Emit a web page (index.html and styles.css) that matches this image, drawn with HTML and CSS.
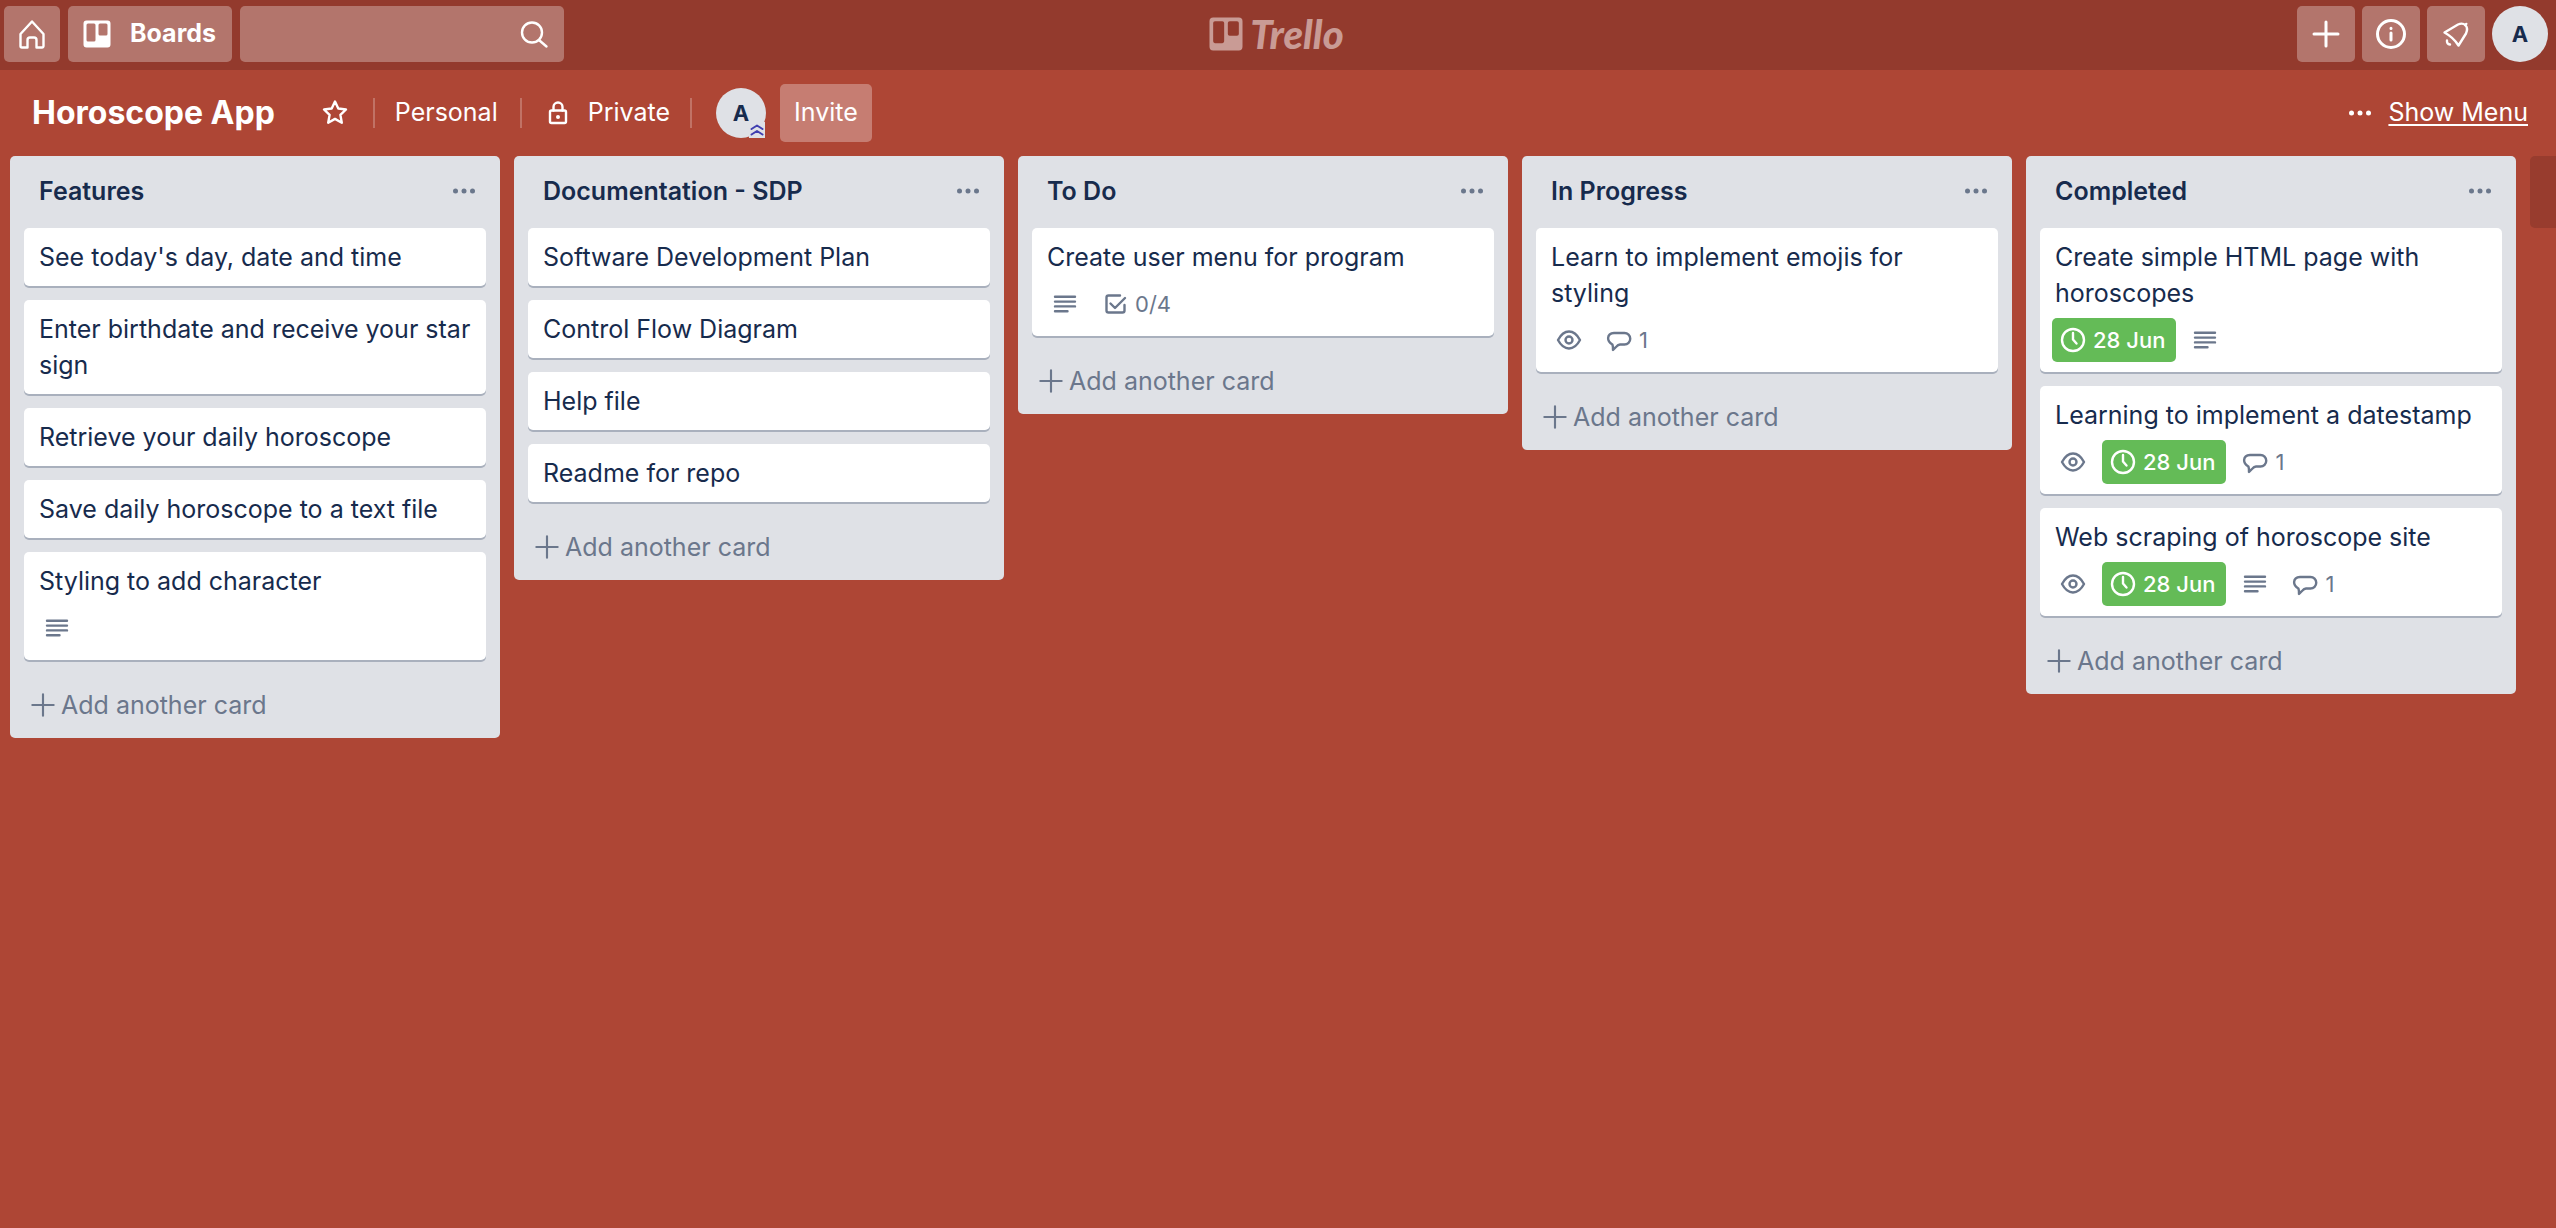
FILE: index.html
```html
<!DOCTYPE html>
<html lang="en">
<head>
<meta charset="utf-8">
<meta name="viewport" content="width=device-width, initial-scale=1">
<title>Horoscope App | Trello</title>
<link rel="stylesheet" href="styles.css">
</head>
<body>
<svg class="sprite" aria-hidden="true">
  <symbol id="i-home" viewBox="0 0 36 36"><path d="M18 5.500L29.500 18V30a1.500 1.500 0 0 1-1.500 1.500h-5.500V24a2.500 2.500 0 0 0-2.500-2.500h-4a2.500 2.500 0 0 0-2.500 2.500v7.500H8A1.500 1.500 0 0 1 6.500 30V18z"/></symbol>
  <symbol id="i-board" viewBox="0 0 36 36"><path fill="currentColor" stroke="none" fill-rule="evenodd" d="M7.500 4.500h21a3 3 0 0 1 3 3v21a3 3 0 0 1-3 3h-21a3 3 0 0 1-3-3v-21a3 3 0 0 1 3-3zM9 7.500a1.500 1.500 0 0 0-1.500 1.500v15A1.500 1.500 0 0 0 9 25.500h6a1.500 1.500 0 0 0 1.500-1.500V9A1.500 1.500 0 0 0 15 7.500zM21 7.500a1.500 1.500 0 0 0-1.500 1.500v9a1.500 1.500 0 0 0 1.500 1.500h6a1.500 1.500 0 0 0 1.500-1.500V9A1.500 1.500 0 0 0 27 7.500z"/></symbol>
  <symbol id="i-search" viewBox="0 0 36 36"><circle cx="16" cy="16.500" r="10"/><path d="M23.500 24.500l7 6"/></symbol>
  <symbol id="i-plus" viewBox="0 0 36 36"><path d="M18 6v24M6 18h24"/></symbol>
  <symbol id="i-info" viewBox="0 0 36 36"><circle cx="18" cy="18" r="13.500"/><path d="M18 17v7M18 12.300v.2"/></symbol>
  <symbol id="i-bell" viewBox="0 0 36 36"><path d="M6.500 16.500L20 8.500q4.500-2 7.500.7q2.800 3 .5 8.300L20.500 29.500q-5-8-14-13zM27 9.200l1.300-1.300"/><path d="M9 24.500q-.5 3.500 3 4"/></symbol>
  <symbol id="i-star" viewBox="0 0 36 36"><path d="M18 6.500l3.300 7 7.700 1-5.600 5.400 1.400 7.800-6.800-3.800-6.800 3.800 1.400-7.800L7 14.500l7.700-1z"/></symbol>
  <symbol id="i-lock" viewBox="0 0 36 36"><rect x="10" y="15.500" width="16" height="12.500" rx="1.500"/><path d="M13.500 15.500v-3.500a4.500 4.500 0 0 1 9 0v3.500"/><circle cx="18" cy="22" r="2" fill="currentColor" stroke="none"/></symbol>
  <symbol id="i-dots" viewBox="0 0 36 36"><g fill="currentColor" stroke="none"><circle cx="9.500" cy="18" r="2.500"/><circle cx="18" cy="18" r="2.500"/><circle cx="26.500" cy="18" r="2.500"/></g></symbol>
  <symbol id="i-desc" viewBox="0 0 36 36"><path d="M8 10.800h20M8 15.600h20M8 20.400h20M8 25.200h12.500"/></symbol>
  <symbol id="i-check" viewBox="0 0 36 36"><path d="M23 9.500H11.500a2 2 0 0 0-2 2v13a2 2 0 0 0 2 2h14a2 2 0 0 0 2-2V19M13.500 17.500l4.500 4.500L28 12"/></symbol>
  <symbol id="i-eye" viewBox="0 0 36 36"><path d="M7 18Q11.500 9.500 18 9.500T29 18Q24.500 26.500 18 26.500T7 18z"/><circle cx="18" cy="18" r="3.500"/></symbol>
  <symbol id="i-comment" viewBox="0 0 36 36"><path d="M13 11h10.500a5.600 5.600 0 0 1 0 11.500H19q-2 .2-3.500 2L12 28q.2-3.500-.6-5.500Q7 20 7.100 16Q7.500 11.200 13 11z"/></symbol>
  <symbol id="i-clock" viewBox="0 0 36 36"><circle cx="18" cy="18" r="11"/><path d="M18 11v6.500l3.500 4"/></symbol>
  <symbol id="i-admin" viewBox="0 0 16 16"><path d="M2.500 7L8 3.500 13.500 7M2.500 12.500L8 9l5.500 3.500"/></symbol>
</svg>

<header class="topbar">
  <div class="topbar-group">
    <button class="top-btn top-btn-home" type="button" aria-label="Home"><svg class="icon"><use href="#i-home"/></svg></button>
    <button class="top-btn top-btn-boards" type="button"><svg class="icon"><use href="#i-board"/></svg><span>Boards</span></button>
    <label class="search"><input type="text" aria-label="Search"><svg class="icon"><use href="#i-search"/></svg></label>
  </div>
  <a class="logo" href="#" aria-label="Trello home"><svg class="icon logo-mark"><use href="#i-board"/></svg><span>Trello</span></a>
  <div class="topbar-group topbar-right">
    <button class="top-btn" type="button" aria-label="Create"><svg class="icon icon-thick"><use href="#i-plus"/></svg></button>
    <button class="top-btn" type="button" aria-label="Information"><svg class="icon icon-thick"><use href="#i-info"/></svg></button>
    <button class="top-btn" type="button" aria-label="Notifications"><svg class="icon"><use href="#i-bell"/></svg></button>
    <button class="avatar avatar-top" type="button">A</button>
  </div>
</header>

<nav class="board-header">
  <h1 class="board-title">Horoscope App</h1>
  <button class="link-btn star" type="button" aria-label="Star board"><svg class="icon"><use href="#i-star"/></svg></button>
  <span class="divider"></span>
  <button class="link-btn personal" type="button"><span>Personal</span></button>
  <span class="divider"></span>
  <button class="link-btn private" type="button"><svg class="icon"><use href="#i-lock"/></svg><span>Private</span></button>
  <span class="divider"></span>
  <button class="avatar avatar-member" type="button">A<svg class="icon admin"><use href="#i-admin"/></svg></button>
  <button class="invite" type="button">Invite</button>
  <a class="show-menu" href="#"><svg class="icon"><use href="#i-dots"/></svg><span>Show Menu</span></a>
</nav>

<main class="board">
  <section class="list">
    <header class="list-header"><h2>Features</h2><button class="list-menu" type="button" aria-label="List actions"><svg class="icon"><use href="#i-dots"/></svg></button></header>
    <ul class="cards">
      <li class="card"><p>See today's day, date and time</p></li>
      <li class="card"><p>Enter birthdate and receive your star sign</p></li>
      <li class="card"><p>Retrieve your daily horoscope</p></li>
      <li class="card"><p>Save daily horoscope to a text file</p></li>
      <li class="card"><p>Styling to add character</p>
        <div class="badges"><span class="badge"><svg class="icon"><use href="#i-desc"/></svg></span></div></li>
    </ul>
    <button class="add-card" type="button"><svg class="icon"><use href="#i-plus"/></svg>Add another card</button>
  </section>

  <section class="list">
    <header class="list-header"><h2>Documentation - SDP</h2><button class="list-menu" type="button" aria-label="List actions"><svg class="icon"><use href="#i-dots"/></svg></button></header>
    <ul class="cards">
      <li class="card"><p>Software Development Plan</p></li>
      <li class="card"><p>Control Flow Diagram</p></li>
      <li class="card"><p>Help file</p></li>
      <li class="card"><p>Readme for repo</p></li>
    </ul>
    <button class="add-card" type="button"><svg class="icon"><use href="#i-plus"/></svg>Add another card</button>
  </section>

  <section class="list">
    <header class="list-header"><h2>To Do</h2><button class="list-menu" type="button" aria-label="List actions"><svg class="icon"><use href="#i-dots"/></svg></button></header>
    <ul class="cards">
      <li class="card"><p>Create user menu for program</p>
        <div class="badges"><span class="badge"><svg class="icon"><use href="#i-desc"/></svg></span><span class="badge"><svg class="icon"><use href="#i-check"/></svg><span class="badge-text">0/4</span></span></div></li>
    </ul>
    <button class="add-card" type="button"><svg class="icon"><use href="#i-plus"/></svg>Add another card</button>
  </section>

  <section class="list">
    <header class="list-header"><h2>In Progress</h2><button class="list-menu" type="button" aria-label="List actions"><svg class="icon"><use href="#i-dots"/></svg></button></header>
    <ul class="cards">
      <li class="card"><p>Learn to implement emojis for styling</p>
        <div class="badges"><span class="badge"><svg class="icon"><use href="#i-eye"/></svg></span><span class="badge"><svg class="icon"><use href="#i-comment"/></svg><span class="badge-text">1</span></span></div></li>
    </ul>
    <button class="add-card" type="button"><svg class="icon"><use href="#i-plus"/></svg>Add another card</button>
  </section>

  <section class="list">
    <header class="list-header"><h2>Completed</h2><button class="list-menu" type="button" aria-label="List actions"><svg class="icon"><use href="#i-dots"/></svg></button></header>
    <ul class="cards">
      <li class="card"><p>Create simple HTML page with horoscopes</p>
        <div class="badges"><span class="badge badge-done"><svg class="icon"><use href="#i-clock"/></svg><span class="badge-text">28 Jun</span></span><span class="badge"><svg class="icon"><use href="#i-desc"/></svg></span></div></li>
      <li class="card"><p>Learning to implement a datestamp</p>
        <div class="badges"><span class="badge"><svg class="icon"><use href="#i-eye"/></svg></span><span class="badge badge-done"><svg class="icon"><use href="#i-clock"/></svg><span class="badge-text">28 Jun</span></span><span class="badge"><svg class="icon"><use href="#i-comment"/></svg><span class="badge-text">1</span></span></div></li>
      <li class="card"><p>Web scraping of horoscope site</p>
        <div class="badges"><span class="badge"><svg class="icon"><use href="#i-eye"/></svg></span><span class="badge badge-done"><svg class="icon"><use href="#i-clock"/></svg><span class="badge-text">28 Jun</span></span><span class="badge"><svg class="icon"><use href="#i-desc"/></svg></span><span class="badge"><svg class="icon"><use href="#i-comment"/></svg><span class="badge-text">1</span></span></div></li>
    </ul>
    <button class="add-card" type="button"><svg class="icon"><use href="#i-plus"/></svg>Add another card</button>
  </section>

  <button class="add-list" type="button" aria-label="Add another list"></button>
</main>
</body>
</html>
```

FILE: styles.css
```css
* { box-sizing: border-box; }

body {
  margin: 0;
  min-height: 100vh;
  background: #ae4635;
  color: #172b4d;
  font-family: Inter, "Liberation Sans", sans-serif;
  font-size: 25px;
  line-height: 36px;
}

h1, h2, p, ul { margin: 0; padding: 0; }
ul { list-style: none; }
a { color: inherit; text-decoration: none; }

button {
  margin: 0;
  padding: 0;
  border: 0;
  background: none;
  color: inherit;
  font: inherit;
  cursor: pointer;
}

.sprite { display: none; }

.icon {
  display: block;
  flex: none;
  width: 36px;
  height: 36px;
  fill: none;
  stroke: currentColor;
  stroke-width: 2.4;
  stroke-linecap: round;
  stroke-linejoin: round;
}
.icon-thick { stroke-width: 3; }

/* Top bar */
.topbar {
  display: grid;
  grid-template-columns: 1fr auto 1fr;
  align-items: center;
  height: 70px;
  padding: 0 8px 2px 4px;
  background: #933a2d;
  color: #fff;
}
.topbar-group { display: flex; gap: 8px; }
.topbar-right { justify-content: flex-end; gap: 7px; }

.top-btn {
  display: flex;
  align-items: center;
  justify-content: center;
  width: 58px;
  height: 56px;
  border-radius: 5px;
  background: rgba(255, 255, 255, 0.3);
}
.top-btn-home { width: 56px; }
.top-btn-boards {
  gap: 15px;
  width: auto;
  padding: 0 16px 0 11px;
  font-weight: 700;
}
.top-btn-boards span { padding-bottom: 2px; }

.search {
  display: flex;
  align-items: center;
  width: 324px;
  height: 56px;
  padding-right: 12px;
  border-radius: 5px;
  background: rgba(255, 255, 255, 0.3);
}
.search input {
  flex: 1;
  min-width: 0;
  height: 100%;
  padding: 0 12px;
  border: 0;
  outline: 0;
  background: none;
  color: #fff;
  font: inherit;
}

.logo {
  display: flex;
  align-items: center;
  gap: 2px;
  padding-right: 4px;
  color: #c99b95;
  font-family: Lato, sans-serif;
  font-size: 40px;
  font-style: italic;
  font-weight: 900;
}
.logo-mark { width: 44px; height: 44px; }

.avatar {
  display: flex;
  align-items: center;
  justify-content: center;
  border-radius: 50%;
  background: #dfe1e6;
  color: #172b4d;
  font-size: 22px;
  font-weight: 700;
}
.avatar-top { width: 56px; height: 56px; }

/* Board header */
.board-header {
  display: flex;
  align-items: center;
  height: 86px;
  padding: 0 28px 0 32px;
  color: #fff;
}
.board-title {
  margin-right: 42px;
  font-size: 32px;
  font-weight: 700;
}
.link-btn {
  display: flex;
  align-items: center;
  margin-right: 20px;
}
.link-btn span,
.show-menu span { padding-bottom: 3px; }
.personal { padding: 0 2px; }
.private { gap: 12px; }
.divider {
  width: 2px;
  height: 30px;
  margin-right: 18px;
  background: rgba(255, 255, 255, 0.24);
}
.avatar-member {
  position: relative;
  width: 50px;
  height: 50px;
  margin: 0 14px 0 6px;
}
.admin {
  position: absolute;
  right: 1px;
  bottom: 0;
  width: 16px;
  height: 16px;
  background: #dfe1e6;
  color: #403fb0;
  stroke-width: 2;
}
.invite {
  height: 58px;
  padding: 0 14px 3px;
  border-radius: 5px;
  background: rgba(255, 255, 255, 0.3);
}
.show-menu {
  display: flex;
  align-items: center;
  gap: 10px;
  margin-left: auto;
}
.show-menu span {
  text-decoration: underline;
  text-decoration-thickness: 2px;
  text-underline-offset: 3px;
}

/* Lists */
.board {
  display: flex;
  align-items: flex-start;
  gap: 14px;
  padding-left: 10px;
}
.list {
  flex: none;
  width: 490px;
  border-radius: 5px;
  background: #dfe1e6;
}
.list-header {
  display: flex;
  align-items: center;
  justify-content: space-between;
  height: 72px;
  padding: 0 18px 2px 29px;
}
.list-header h2 {
  font-size: 25px;
  font-weight: 600;
}
.list-menu { color: #6b778c; }

.cards {
  display: flex;
  flex-direction: column;
  gap: 14px;
  padding: 0 14px;
}
.card {
  padding: 11px 12px;
  border-radius: 5px;
  background: #fff;
  box-shadow: 0 2px 0 rgba(9, 30, 66, 0.25);
}
.card p { padding-left: 3px; }
.card:has(.badges) { padding-bottom: 10px; }

.badges {
  display: flex;
  gap: 8px;
  margin-top: 7px;
  color: #6b778c;
  font-size: 22px;
}
.badge {
  display: flex;
  align-items: center;
  height: 44px;
  padding: 0 3px;
  border-radius: 5px;
}
.badge-text { padding: 0 8px 0 2px; }
.badge-done {
  background: #64bb57;
  color: #fff;
  font-weight: 500;
}

.add-card {
  display: flex;
  align-items: center;
  gap: 2px;
  margin: 14px 14px 0;
  padding: 13px 0 15px 3px;
  color: #6b778c;
}
.add-card .icon {
  width: 32px;
  height: 32px;
}

/* Takes whatever room is left beside the lists */
.add-list {
  flex: 0 1 490px;
  min-width: 0;
  height: 72px;
  border-radius: 5px 0 0 5px;
  background: #983c2e;
}
```
